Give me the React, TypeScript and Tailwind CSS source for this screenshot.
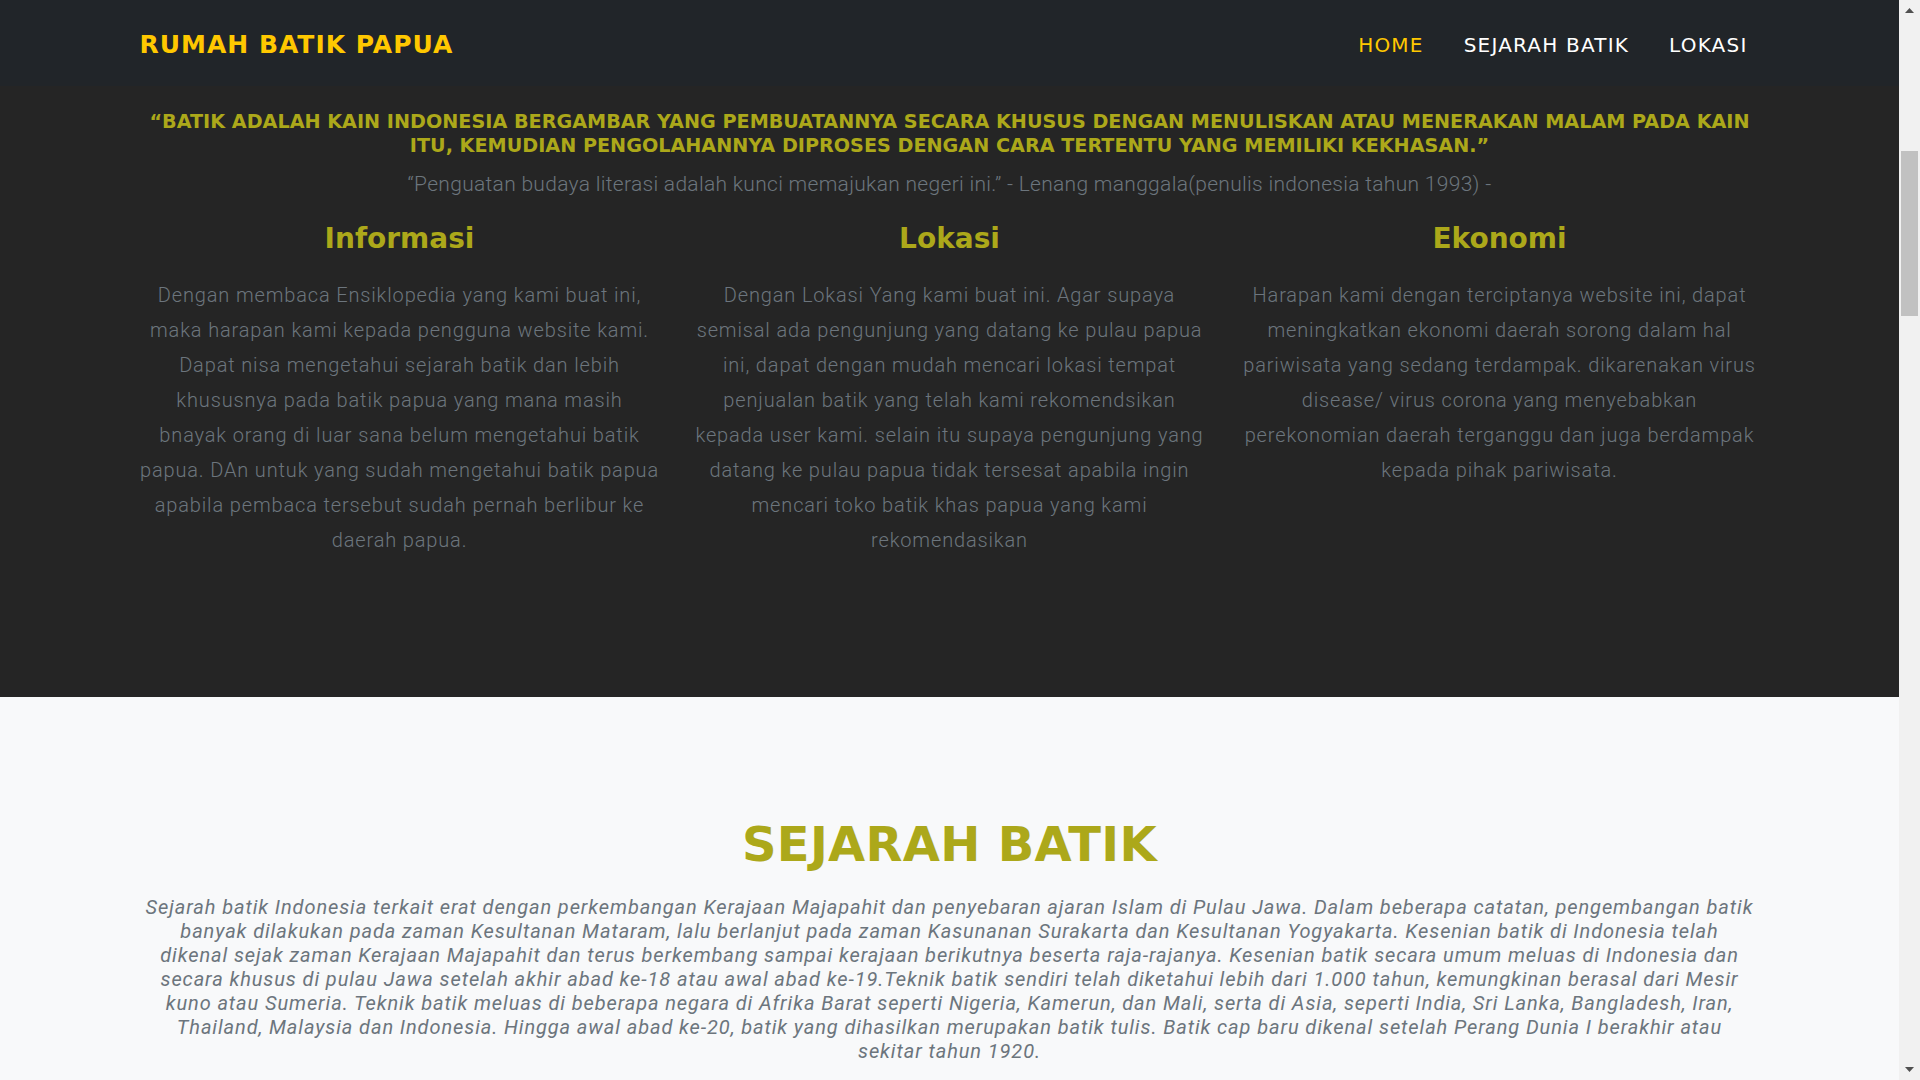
const navLinks = [
  { label: 'HOME', active: true },
  { label: 'SEJARAH BATIK', active: false },
  { label: 'LOKASI', active: false },
];

// lines are kept as in the original layout
const columns = [
  {
    title: 'Informasi',
    lines: [
      'Dengan membaca Ensiklopedia yang kami buat ini,',
      'maka harapan kami kepada pengguna website kami.',
      'Dapat nisa mengetahui sejarah batik dan lebih',
      'khususnya pada batik papua yang mana masih',
      'bnayak orang di luar sana belum mengetahui batik',
      'papua. DAn untuk yang sudah mengetahui batik papua',
      'apabila pembaca tersebut sudah pernah berlibur ke',
      'daerah papua.',
    ],
  },
  {
    title: 'Lokasi',
    lines: [
      'Dengan Lokasi Yang kami buat ini. Agar supaya',
      'semisal ada pengunjung yang datang ke pulau papua',
      'ini, dapat dengan mudah mencari lokasi tempat',
      'penjualan batik yang telah kami rekomendsikan',
      'kepada user kami. selain itu supaya pengunjung yang',
      'datang ke pulau papua tidak tersesat apabila ingin',
      'mencari toko batik khas papua yang kami',
      'rekomendasikan',
    ],
  },
  {
    title: 'Ekonomi',
    lines: [
      'Harapan kami dengan terciptanya website ini, dapat',
      'meningkatkan ekonomi daerah sorong dalam hal',
      'pariwisata yang sedang terdampak. dikarenakan virus',
      'disease/ virus corona yang menyebabkan',
      'perekonomian daerah terganggu dan juga berdampak',
      'kepada pihak pariwisata.',
    ],
  },
];

const sejarahLines = [
  'Sejarah batik Indonesia terkait erat dengan perkembangan Kerajaan Majapahit dan penyebaran ajaran Islam di Pulau Jawa. Dalam beberapa catatan, pengembangan batik',
  'banyak dilakukan pada zaman Kesultanan Mataram, lalu berlanjut pada zaman Kasunanan Surakarta dan Kesultanan Yogyakarta. Kesenian batik di Indonesia telah',
  'dikenal sejak zaman Kerajaan Majapahit dan terus berkembang sampai kerajaan berikutnya beserta raja-rajanya. Kesenian batik secara umum meluas di Indonesia dan',
  'secara khusus di pulau Jawa setelah akhir abad ke-18 atau awal abad ke-19.Teknik batik sendiri telah diketahui lebih dari 1.000 tahun, kemungkinan berasal dari Mesir',
  'kuno atau Sumeria. Teknik batik meluas di beberapa negara di Afrika Barat seperti Nigeria, Kamerun, dan Mali, serta di Asia, seperti India, Sri Lanka, Bangladesh, Iran,',
  'Thailand, Malaysia dan Indonesia. Hingga awal abad ke-20, batik yang dihasilkan merupakan batik tulis. Batik cap baru dikenal setelah Perang Dunia I berakhir atau',
  'sekitar tahun 1920.',
];

function ScrollArrow({ down }: { down?: boolean }) {
  return (
    <div className="h-[21px] w-full flex items-center justify-center">
      <svg width="9" height="5" viewBox="0 0 9 5">
        <polygon points={down ? '0,0 9,0 4.5,5' : '0,5 4.5,0 9,5'} fill="#505050" />
      </svg>
    </div>
  );
}

export default function App() {
  return (
    <div className="min-h-screen bg-[#f8f9fa] pr-[21px]">
      {/* Navbar */}
      <nav className="bg-[#212529] h-[86px]">
        <div className="max-w-[1650px] mx-auto px-[15px] pt-1 h-full flex items-center justify-between">
          <a href="#" className="font-['DejaVu_Sans',sans-serif] font-bold text-[25px] tracking-[1px] text-[#ffc800]">
            RUMAH BATIK PAPUA
          </a>
          <ul className="flex items-center gap-[40px] pr-3">
            {navLinks.map((link) => (
              <li key={link.label}>
                <a
                  href="#"
                  className={`font-['DejaVu_Sans',sans-serif] text-[20px] tracking-[1.2px] ${
                    link.active ? 'text-[#ffc800]' : 'text-white'
                  }`}
                >
                  {link.label}
                </a>
              </li>
            ))}
          </ul>
        </div>
      </nav>

      {/* Intro */}
      <section className="bg-[#252525] pt-6 pb-[139px]">
        <div className="max-w-[1650px] mx-auto px-[15px] text-center">
          <h3 className="font-['DejaVu_Sans',sans-serif] font-bold text-[19.2px] leading-[24px] text-[#aca81a] uppercase">
            “Batik adalah kain Indonesia bergambar yang pembuatannya secara khusus dengan menuliskan atau menerakan malam pada kain itu, kemudian pengolahannya diproses dengan cara tertentu yang memiliki kekhasan.”
          </h3>
          <p className="font-['Roboto',sans-serif] font-light text-[21px] leading-[30px] tracking-[0.3px] text-[#6c757d] mt-[11px]">
            “Penguatan budaya literasi adalah kunci memajukan negeri ini.” - Lenang manggala(penulis indonesia tahun 1993) -
          </p>

          <div className="grid grid-cols-3 gap-[30px] mt-[22px]">
            {columns.map((col) => (
              <div key={col.title}>
                <h4 className="font-['DejaVu_Sans',sans-serif] font-bold text-[28px] leading-[36px] text-[#aca81a]">
                  {col.title}
                </h4>
                <p className="flex flex-col items-center font-['Roboto',sans-serif] font-light text-[20px] leading-[35px] tracking-[0.85px] text-[#6c757d] mt-[21px]">
                  {col.lines.map((line) => (
                    <span key={line} className="whitespace-nowrap">
                      {line}
                    </span>
                  ))}
                </p>
              </div>
            ))}
          </div>
        </div>
      </section>

      {/* Sejarah Batik */}
      <section className="bg-[#f8f9fa] pt-[118px] pb-[160px]">
        <div className="max-w-[1650px] mx-auto px-[15px] text-center">
          <h2 className="font-['DejaVu_Sans',sans-serif] font-bold text-[48px] leading-[58px] tracking-[0.3px] text-[#aca81a] uppercase">
            Sejarah Batik
          </h2>
          <p className="flex flex-col items-center font-['Roboto',sans-serif] italic text-[20px] leading-[24px] tracking-[0.9px] text-[#6c757d] mt-[22px]">
            {sejarahLines.map((line) => (
              <span key={line} className="whitespace-nowrap">
                {line}
              </span>
            ))}
          </p>
        </div>
      </section>

      {/* Browser scrollbar as seen in the screenshot */}
      <div className="fixed top-0 right-0 h-screen w-[21px] bg-[#f1f1f1] flex flex-col">
        <ScrollArrow />
        <div className="mt-[130px] mx-[2px] h-[165px] bg-[#c1c1c1]" />
        <div className="flex-1" />
        <ScrollArrow down />
      </div>
    </div>
  );
}
